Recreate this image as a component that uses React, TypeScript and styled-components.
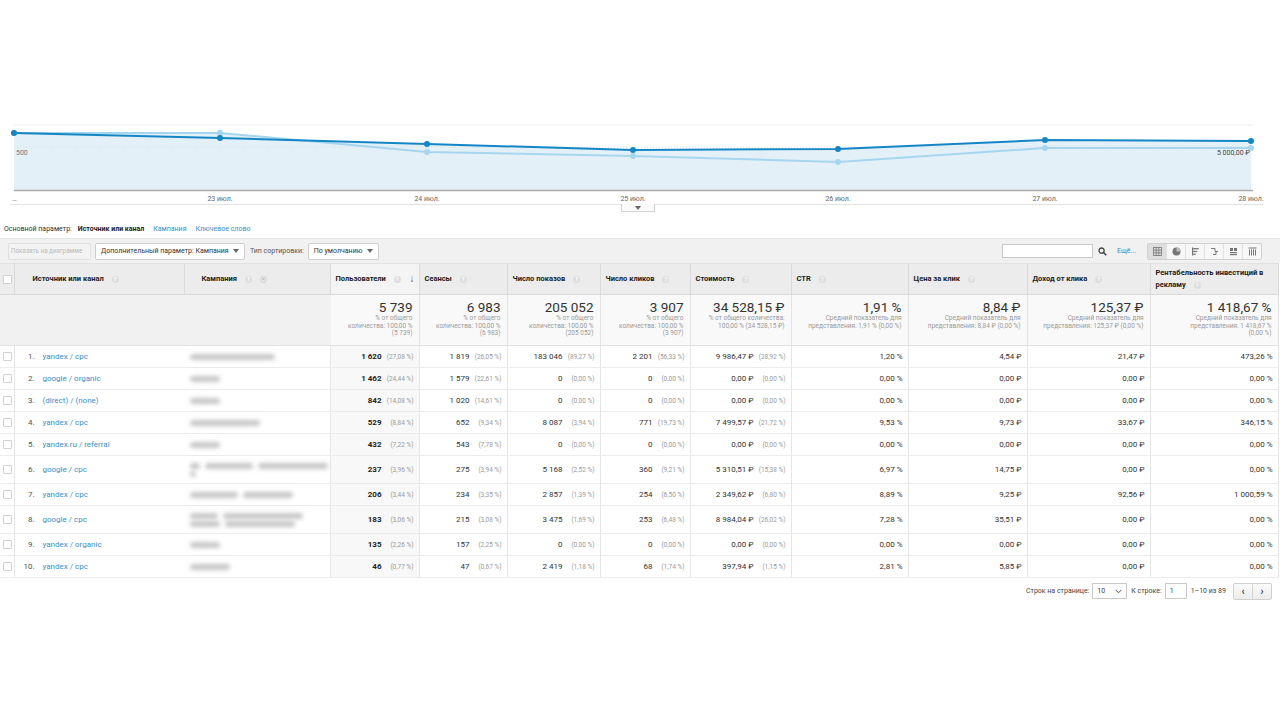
import React from "react";
import styled, { createGlobalStyle } from "styled-components";

const GlobalStyle = createGlobalStyle`
  body {
    margin: 0;
    background: #fff;
    font-family: Roboto, "Liberation Sans", Arial, sans-serif;
    color: #333;
  }
`;

const Page = styled.div`
  width: 1280px;
  padding-top: 120px;
`;

const ChartWrap = styled.div`
  position: relative;
  height: 100px;
`;

const CollapseTab = styled.div`
  position: absolute;
  left: 621px;
  top: 84px;
  width: 32px;
  height: 7px;
  border: 1px solid #d4d4d4;
  border-top: none;
  background: #fafafa;
  display: flex;
  align-items: center;
  justify-content: center;
`;

const DimRow = styled.div`
  height: 18px;
  display: flex;
  align-items: center;
  padding-left: 4px;
  font-size: 7px;
  color: #333;
`;

const DimLabel = styled.span`
  margin-right: 6px;
`;

const DimItem = styled.span<{ $active?: boolean }>`
  margin-right: 9px;
  font-weight: ${(p) => (p.$active ? 700 : 400)};
  color: ${(p) => (p.$active ? "#222" : "#3b8fc6")};
`;

const Toolbar = styled.div`
  height: 24px;
  background: #f1f1f1;
  border-top: 1px solid #e4e4e4;
  display: flex;
  align-items: center;
  padding: 0 18px 0 8px;
  font-size: 7px;
`;

const ToolButton = styled.div<{ $disabled?: boolean; $w: number }>`
  width: ${(p) => p.$w}px;
  height: 17px;
  box-sizing: border-box;
  border: 1px solid ${(p) => (p.$disabled ? "#e0e0e0" : "#cfcfcf")};
  background: ${(p) => (p.$disabled ? "#f3f3f3" : "#fff")};
  color: ${(p) => (p.$disabled ? "#b9b9b9" : "#333")};
  font-size: ${(p) => (p.$disabled ? 6.3 : 7)}px;
  border-radius: 2px;
  display: flex;
  align-items: center;
  justify-content: space-between;
  gap: 4px;
  padding: 0 ${(p) => (p.$disabled ? 2 : 5)}px;
  margin-right: 4px;
  white-space: nowrap;
  overflow: hidden;
`;

const ToolLabel = styled.span`
  color: #555;
  margin: 0 4px 0 1px;
`;

const Spacer = styled.div`
  flex: 1;
`;

const SearchBox = styled.div`
  width: 91px;
  height: 14px;
  border: 1px solid #c9c9c9;
  background: #fff;
  box-sizing: border-box;
`;

const SearchButton = styled.div`
  width: 20px;
  height: 14px;
  display: flex;
  align-items: center;
  justify-content: center;
`;

const MoreLink = styled.span`
  color: #3b8fc6;
  margin: 0 11px 0 4px;
`;

const ViewGroup = styled.div`
  display: flex;
  border: 1px solid #d0d0d0;
  border-radius: 2px;
  background: #f7f7f7;
`;

const ViewButton = styled.div<{ $active?: boolean }>`
  width: 18px;
  height: 15px;
  display: flex;
  align-items: center;
  justify-content: center;
  background: ${(p) => (p.$active ? "#dedede" : "transparent")};
  border-right: 1px solid #e2e2e2;
  &:last-child {
    border-right: none;
  }
`;

const Table = styled.table`
  width: 1278px;
  table-layout: fixed;
  border-collapse: collapse;
  font-size: 8px;
`;

const HeadCell = styled.th<{ $sorted?: boolean; $pad?: number }>`
  height: 30px;
  padding: 0 5px 0 ${(p) => p.$pad ?? 5}px;
  background: ${(p) => (p.$sorted ? "#f4f4f4" : "#ececec")};
  border-right: 1px solid #dadada;
  border-bottom: 1px solid #dadada;
  border-top: 1px solid #e2e2e2;
  text-align: left;
  font-size: 7.5px;
  font-weight: 700;
  color: #222;
  line-height: 12px;
  vertical-align: middle;
`;

const HeadInner = styled.div`
  display: flex;
  align-items: center;
  justify-content: space-between;
`;

const HelpIcon = styled.span`
  display: inline-flex;
  width: 7px;
  height: 7px;
  border-radius: 50%;
  background: #dedede;
  color: #fff;
  font-size: 5.5px;
  font-weight: 700;
  align-items: center;
  justify-content: center;
  margin-left: 6px;
  vertical-align: middle;
`;

const RemoveIcon = styled.span`
  display: inline-flex;
  width: 7px;
  height: 7px;
  border-radius: 50%;
  border: 1px solid #cfcfcf;
  color: #bbb;
  font-size: 6px;
  align-items: center;
  justify-content: center;
  margin-left: 8px;
  vertical-align: middle;
  box-sizing: border-box;
`;

const SortArrow = styled.span`
  color: #555;
  font-size: 10px;
  font-weight: 400;
  margin-right: -1px;
`;

const SumCell = styled.td<{ $metric?: boolean }>`
  height: 46px;
  padding: 4px 6px 0 4px;
  vertical-align: top;
  text-align: right;
  background: ${(p) => (p.$metric ? "#f9f9f9" : "#f1f1f1")};
  border-right: 1px solid ${(p) => (p.$metric ? "#e4e4e4" : "#f1f1f1")};
  border-bottom: 1px solid #e2e2e2;
`;

const BigNum = styled.div`
  font-size: 13.5px;
  line-height: 16px;
  color: #333;
`;

const SumNote = styled.div`
  font-size: 6.5px;
  line-height: 7.6px;
  color: #9a9a9a;
`;

const Row = styled.tr<{ $tall?: boolean }>`
  height: ${(p) => (p.$tall ? 28 : 22)}px;
`;

const CheckCell = styled.td`
  padding: 0 0 0 3px;
  border-right: 1px solid #e6e6e6;
  border-bottom: 1px solid #ececec;
`;

const CheckBox = styled.div`
  width: 7px;
  height: 7px;
  border: 1px solid #d2d2d2;
  border-radius: 1px;
  background: #fff;
`;

const SourceCell = styled.td`
  padding: 0;
  border-bottom: 1px solid #ececec;
  white-space: nowrap;
`;

const Index = styled.span`
  display: inline-block;
  width: 20px;
  text-align: right;
  color: #555;
  margin-right: 8px;
`;

const SourceLink = styled.span`
  color: #3b8fc6;
`;

const CampaignCell = styled.td`
  padding: 0 0 0 6px;
  border-right: 1px solid #e6e6e6;
  border-bottom: 1px solid #ececec;
`;

const BlurLine = styled.div`
  display: flex;
  gap: 5px;
  margin: 2px 0;
`;

const BlurBar = styled.div<{ $w: number }>`
  width: ${(p) => p.$w}px;
  height: 6px;
  border-radius: 3px;
  background: #bdbdbd;
  filter: blur(2.2px);
  opacity: 0.85;
`;

const Cell = styled.td<{ $sorted?: boolean }>`
  padding: 0 5px 0 4px;
  text-align: right;
  white-space: nowrap;
  color: #333;
  background: ${(p) => (p.$sorted ? "#f8f8f8" : "#fff")};
  border-right: 1px solid #e6e6e6;
  border-bottom: 1px solid #ececec;
`;

const Val = styled.span<{ $bold?: boolean }>`
  font-weight: ${(p) => (p.$bold ? 700 : 400)};
  color: ${(p) => (p.$bold ? "#222" : "#333")};
`;

const Pct = styled.span`
  display: inline-block;
  width: 32px;
  text-align: right;
  font-size: 6.5px;
  color: #9a9a9a;
`;

const Footer = styled.div`
  height: 26px;
  display: flex;
  align-items: center;
  justify-content: flex-end;
  padding-right: 8px;
  font-size: 7px;
  color: #444;
`;

const FooterSelect = styled.div`
  width: 35px;
  height: 16px;
  box-sizing: border-box;
  border: 1px solid #c9c9c9;
  background: #fff;
  display: flex;
  align-items: center;
  justify-content: space-between;
  padding: 0 4px;
  margin: 0 4px 0 3px;
`;

const FooterInput = styled.div`
  width: 22px;
  height: 16px;
  box-sizing: border-box;
  border: 1px solid #c9c9c9;
  background: #fff;
  display: flex;
  align-items: center;
  padding-left: 4px;
  margin: 0 4px 0 3px;
`;

const PagerGroup = styled.div`
  display: flex;
  margin-left: 7px;
  border: 1px solid #cfcfcf;
  border-radius: 2px;
  background: linear-gradient(#fbfbfb, #ececec);
`;

const PagerButton = styled.div`
  width: 18px;
  height: 15px;
  display: flex;
  align-items: center;
  justify-content: center;
  font-size: 10px;
  font-weight: 700;
  color: #333;
  border-right: 1px solid #d6d6d6;
  &:last-child {
    border-right: none;
  }
`;

type Pair = [string, string];
type RowData = {
  src: string;
  camp: number[][];
  tall?: boolean;
  users: Pair;
  sessions: Pair;
  impr: Pair;
  clicks: Pair;
  cost: Pair;
  ctr: string;
  cpc: string;
  rpc: string;
  roi: string;
};

const zeroAds = {
  impr: ["0", "0,00 %"] as Pair,
  clicks: ["0", "0,00 %"] as Pair,
  cost: ["0,00 ₽", "0,00 %"] as Pair,
  ctr: "0,00 %",
  cpc: "0,00 ₽",
  rpc: "0,00 ₽",
  roi: "0,00 %",
};

const rows: RowData[] = [
  { src: "yandex / cpc", camp: [[85]], users: ["1 620", "27,08 %"], sessions: ["1 819", "26,05 %"], impr: ["183 046", "89,27 %"], clicks: ["2 201", "56,33 %"], cost: ["9 986,47 ₽", "28,92 %"], ctr: "1,20 %", cpc: "4,54 ₽", rpc: "21,47 ₽", roi: "473,26 %" },
  { src: "google / organic", camp: [[30]], users: ["1 462", "24,44 %"], sessions: ["1 579", "22,61 %"], ...zeroAds },
  { src: "(direct) / (none)", camp: [[30]], users: ["842", "14,08 %"], sessions: ["1 020", "14,61 %"], ...zeroAds },
  { src: "yandex / cpc", camp: [[70]], users: ["529", "8,84 %"], sessions: ["652", "9,34 %"], impr: ["8 087", "3,94 %"], clicks: ["771", "19,73 %"], cost: ["7 499,57 ₽", "21,72 %"], ctr: "9,53 %", cpc: "9,73 ₽", rpc: "33,67 ₽", roi: "346,15 %" },
  { src: "yandex.ru / referral", camp: [[30]], users: ["432", "7,22 %"], sessions: ["543", "7,78 %"], ...zeroAds },
  { src: "google / cpc", camp: [[10, 48, 70], [6]], tall: true, users: ["237", "3,96 %"], sessions: ["275", "3,94 %"], impr: ["5 168", "2,52 %"], clicks: ["360", "9,21 %"], cost: ["5 310,51 ₽", "15,38 %"], ctr: "6,97 %", cpc: "14,75 ₽", rpc: "0,00 ₽", roi: "0,00 %" },
  { src: "yandex / cpc", camp: [[48, 50]], users: ["206", "3,44 %"], sessions: ["234", "3,35 %"], impr: ["2 857", "1,39 %"], clicks: ["254", "6,50 %"], cost: ["2 349,62 ₽", "6,80 %"], ctr: "8,89 %", cpc: "9,25 ₽", rpc: "92,56 ₽", roi: "1 000,59 %" },
  { src: "google / cpc", camp: [[28, 80], [30, 70]], tall: true, users: ["183", "3,06 %"], sessions: ["215", "3,08 %"], impr: ["3 475", "1,69 %"], clicks: ["253", "6,48 %"], cost: ["8 984,04 ₽", "26,02 %"], ctr: "7,28 %", cpc: "35,51 ₽", rpc: "0,00 ₽", roi: "0,00 %" },
  { src: "yandex / organic", camp: [[30]], users: ["135", "2,26 %"], sessions: ["157", "2,25 %"], ...zeroAds },
  { src: "yandex / cpc", camp: [[40]], users: ["46", "0,77 %"], sessions: ["47", "0,67 %"], impr: ["2 419", "1,18 %"], clicks: ["68", "1,74 %"], cost: ["397,94 ₽", "1,15 %"], ctr: "2,81 %", cpc: "5,85 ₽", rpc: "0,00 ₽", roi: "0,00 %" },
];

const xs = [14, 220, 427, 633, 838, 1045, 1251];
const darkY = [13, 18, 24, 30, 29, 20, 21];
const lightY = [13, 13, 32, 36, 42, 28, 28];
const dates = ["…", "23 июл.", "24 июл.", "25 июл.", "26 июл.", "27 июл.", "28 июл."];
const BASE = 70.5;

const pts = (ys: number[]) => xs.map((x, i) => `${x},${ys[i]}`).join(" ");
const area = (ys: number[]) => `${xs[0]},${BASE} ${pts(ys)} ${xs[xs.length - 1]},${BASE}`;

const Chart: React.FC = () => (
  <svg width="1280" height="100" viewBox="0 0 1280 100">
    <line x1="14" y1="5" x2="1253" y2="5" stroke="#efefef" />
    <polygon points={area(lightY)} fill="#e4f0f7" />
    <polygon points={area(darkY)} fill="#e4f0f7" />
    <line x1="14" y1="27" x2="1253" y2="27" stroke="#d4dde2" strokeDasharray="1 2" />
    <line x1="14" y1={BASE} x2="1253" y2={BASE} stroke="#aaa" strokeWidth="1.5" />
    <polyline points={pts(lightY)} fill="none" stroke="#a5d6ee" strokeWidth="2" />
    {xs.map((x, i) => (
      <circle key={"l" + i} cx={x} cy={lightY[i]} r="3" fill="#a5d6ee" />
    ))}
    <polyline points={pts(darkY)} fill="none" stroke="#1486c6" strokeWidth="2" />
    {xs.map((x, i) => (
      <circle key={"d" + i} cx={x} cy={darkY[i]} r="3" fill="#1486c6" />
    ))}
    <text x="16" y="34.5" fontSize="7" fill="#777" fontFamily="Roboto, sans-serif">500</text>
    <text x="1250" y="34.5" fontSize="7" fill="#444" textAnchor="end" fontFamily="Roboto, sans-serif">5 000,00 ₽</text>
    {dates.map((d, i) => (
      <text
        key={d}
        x={i === 0 ? 12 : xs[i]}
        y="81"
        fontSize="7"
        fill="#666"
        textAnchor={i === 0 ? "start" : "middle"}
        fontFamily="Roboto, sans-serif"
      >
        {d}
      </text>
    ))}
    <line x1="10" y1="84.5" x2="1263" y2="84.5" stroke="#e2e2e2" />
  </svg>
);

const Caret: React.FC = () => (
  <svg width="6" height="4" viewBox="0 0 6 4" style={{ flexShrink: 0 }}>
    <path d="M0 0 L6 0 L3 4 Z" fill="#666" />
  </svg>
);

const Chevron: React.FC = () => (
  <svg width="7" height="5" viewBox="0 0 7 5">
    <path d="M0.5 0.8 L3.5 3.8 L6.5 0.8" fill="none" stroke="#555" strokeWidth="1" />
  </svg>
);

const ViewIcon: React.FC<{ kind: number }> = ({ kind }) => {
  const c = "#777";
  return (
    <svg width="9" height="9" viewBox="0 0 9 9">
      {kind === 0 && (
        <g fill="none" stroke={c} strokeWidth="0.8">
          <rect x="0.5" y="0.5" width="8" height="8" />
          <path d="M0.5 3.2 H8.5 M0.5 5.8 H8.5 M3.2 0.5 V8.5 M5.8 0.5 V8.5" />
        </g>
      )}
      {kind === 1 && (
        <g>
          <circle cx="4.5" cy="4.5" r="4" fill={c} />
          <path d="M4.5 4.5 V0.5 A4 4 0 0 1 8.5 4.5 Z" fill="#bbb" />
        </g>
      )}
      {kind === 2 && (
        <g fill={c}>
          <rect x="1" y="0.5" width="1.2" height="8" />
          <rect x="2.2" y="1" width="5.5" height="1.3" />
          <rect x="2.2" y="3.8" width="4" height="1.3" />
          <rect x="2.2" y="6.6" width="2.5" height="1.3" />
        </g>
      )}
      {kind === 3 && (
        <g fill="none" stroke={c} strokeWidth="1">
          <path d="M1 1.5 H5 V4.5 H8" />
          <path d="M3 7.5 H6 V4.5" />
        </g>
      )}
      {kind === 4 && (
        <g fill={c}>
          <rect x="1" y="1" width="3" height="3" />
          <rect x="5" y="1" width="3" height="3" />
          <rect x="1" y="5" width="7" height="1.2" />
          <rect x="1" y="7" width="7" height="1.2" />
        </g>
      )}
      {kind === 5 && (
        <g fill={c}>
          <rect x="0.5" y="0.5" width="8" height="1" />
          <rect x="1" y="2.5" width="1" height="6" />
          <rect x="3" y="2.5" width="1" height="6" />
          <rect x="5" y="2.5" width="1" height="6" />
          <rect x="7" y="2.5" width="1" height="6" />
        </g>
      )}
    </svg>
  );
};

const colWidths = [14, 170, 146, 89, 88, 93, 90, 101, 117, 119, 123, 128];

const Help = () => <HelpIcon>?</HelpIcon>;

const PairCell: React.FC<{ v: Pair; bold?: boolean; sorted?: boolean }> = ({ v, bold, sorted }) => (
  <Cell $sorted={sorted}>
    <Val $bold={bold}>{v[0]}</Val>
    <Pct>({v[1]})</Pct>
  </Cell>
);

const App: React.FC = () => {
  return (
    <Page>
      <GlobalStyle />
      <ChartWrap>
        <Chart />
        <CollapseTab>
          <Caret />
        </CollapseTab>
      </ChartWrap>

      <DimRow>
        <DimLabel>Основной параметр:</DimLabel>
        <DimItem $active>Источник или канал</DimItem>
        <DimItem>Кампания</DimItem>
        <DimItem>Ключевое слово</DimItem>
      </DimRow>

      <Toolbar>
        <ToolButton $disabled $w={83}>Показать на диаграмме</ToolButton>
        <ToolButton $w={150}>
          Дополнительный параметр: Кампания <Caret />
        </ToolButton>
        <ToolLabel>Тип сортировки:</ToolLabel>
        <ToolButton $w={71}>
          По умолчанию <Caret />
        </ToolButton>
        <Spacer />
        <SearchBox />
        <SearchButton>
          <svg width="9" height="9" viewBox="0 0 9 9">
            <circle cx="3.6" cy="3.6" r="2.6" fill="none" stroke="#444" strokeWidth="1.3" />
            <path d="M5.5 5.5 L8.3 8.3" stroke="#444" strokeWidth="1.6" />
          </svg>
        </SearchButton>
        <MoreLink>Ещё...</MoreLink>
        <ViewGroup>
          {[0, 1, 2, 3, 4, 5].map((k) => (
            <ViewButton key={k} $active={k === 0}>
              <ViewIcon kind={k} />
            </ViewButton>
          ))}
        </ViewGroup>
      </Toolbar>

      <Table>
        <colgroup>
          {colWidths.map((w, i) => (
            <col key={i} style={{ width: w }} />
          ))}
        </colgroup>
        <thead>
          <tr>
            <HeadCell $pad={3}>
              <CheckBox />
            </HeadCell>
            <HeadCell $pad={18}>
              Источник или канал <Help />
            </HeadCell>
            <HeadCell $pad={17}>
              Кампания <Help />
              <RemoveIcon>×</RemoveIcon>
            </HeadCell>
            <HeadCell $sorted>
              <HeadInner>
                <span>
                  Пользователи <Help />
                </span>
                <SortArrow>↓</SortArrow>
              </HeadInner>
            </HeadCell>
            <HeadCell>
              Сеансы <Help />
            </HeadCell>
            <HeadCell>
              Число показов <Help />
            </HeadCell>
            <HeadCell>
              Число кликов <Help />
            </HeadCell>
            <HeadCell>
              Стоимость <Help />
            </HeadCell>
            <HeadCell>
              CTR <Help />
            </HeadCell>
            <HeadCell>
              Цена за клик <Help />
            </HeadCell>
            <HeadCell>
              Доход от клика <Help />
            </HeadCell>
            <HeadCell>
              Рентабельность инвестиций в
              <br />
              рекламу <Help />
            </HeadCell>
          </tr>
        </thead>
        <tbody>
          <tr>
            <SumCell />
            <SumCell />
            <SumCell />
            <SumCell $metric>
              <BigNum>5 739</BigNum>
              <SumNote>% от общего</SumNote>
              <SumNote>количества: 100,00 %</SumNote>
              <SumNote>(5 739)</SumNote>
            </SumCell>
            <SumCell $metric>
              <BigNum>6 983</BigNum>
              <SumNote>% от общего</SumNote>
              <SumNote>количества: 100,00 %</SumNote>
              <SumNote>(6 983)</SumNote>
            </SumCell>
            <SumCell $metric>
              <BigNum>205 052</BigNum>
              <SumNote>% от общего</SumNote>
              <SumNote>количества: 100,00 %</SumNote>
              <SumNote>(205 052)</SumNote>
            </SumCell>
            <SumCell $metric>
              <BigNum>3 907</BigNum>
              <SumNote>% от общего</SumNote>
              <SumNote>количества: 100,00 %</SumNote>
              <SumNote>(3 907)</SumNote>
            </SumCell>
            <SumCell $metric>
              <BigNum>34 528,15 ₽</BigNum>
              <SumNote>% от общего количества:</SumNote>
              <SumNote>100,00 % (34 528,15 ₽)</SumNote>
            </SumCell>
            <SumCell $metric>
              <BigNum>1,91 %</BigNum>
              <SumNote>Средний показатель для</SumNote>
              <SumNote>представления: 1,91 % (0,00 %)</SumNote>
            </SumCell>
            <SumCell $metric>
              <BigNum>8,84 ₽</BigNum>
              <SumNote>Средний показатель для</SumNote>
              <SumNote>представления: 8,84 ₽ (0,00 %)</SumNote>
            </SumCell>
            <SumCell $metric>
              <BigNum>125,37 ₽</BigNum>
              <SumNote>Средний показатель для</SumNote>
              <SumNote>представления: 125,37 ₽ (0,00 %)</SumNote>
            </SumCell>
            <SumCell $metric>
              <BigNum>1 418,67 %</BigNum>
              <SumNote>Средний показатель для</SumNote>
              <SumNote>представления: 1 418,67 %</SumNote>
              <SumNote>(0,00 %)</SumNote>
            </SumCell>
          </tr>
          {rows.map((r, i) => (
            <Row key={i} $tall={r.tall}>
              <CheckCell>
                <CheckBox />
              </CheckCell>
              <SourceCell>
                <Index>{i + 1}.</Index>
                <SourceLink>{r.src}</SourceLink>
              </SourceCell>
              <CampaignCell>
                {r.camp.map((line, j) => (
                  <BlurLine key={j}>
                    {line.map((w, k) => (
                      <BlurBar key={k} $w={w} />
                    ))}
                  </BlurLine>
                ))}
              </CampaignCell>
              <PairCell v={r.users} bold sorted />
              <PairCell v={r.sessions} />
              <PairCell v={r.impr} />
              <PairCell v={r.clicks} />
              <PairCell v={r.cost} />
              <Cell>{r.ctr}</Cell>
              <Cell>{r.cpc}</Cell>
              <Cell>{r.rpc}</Cell>
              <Cell>{r.roi}</Cell>
            </Row>
          ))}
        </tbody>
      </Table>

      <Footer>
        Строк на странице:
        <FooterSelect>
          10 <Chevron />
        </FooterSelect>
        К строке:
        <FooterInput>1</FooterInput>
        1–10 из 89
        <PagerGroup>
          <PagerButton>‹</PagerButton>
          <PagerButton>›</PagerButton>
        </PagerGroup>
      </Footer>
    </Page>
  );
};

export default App;
